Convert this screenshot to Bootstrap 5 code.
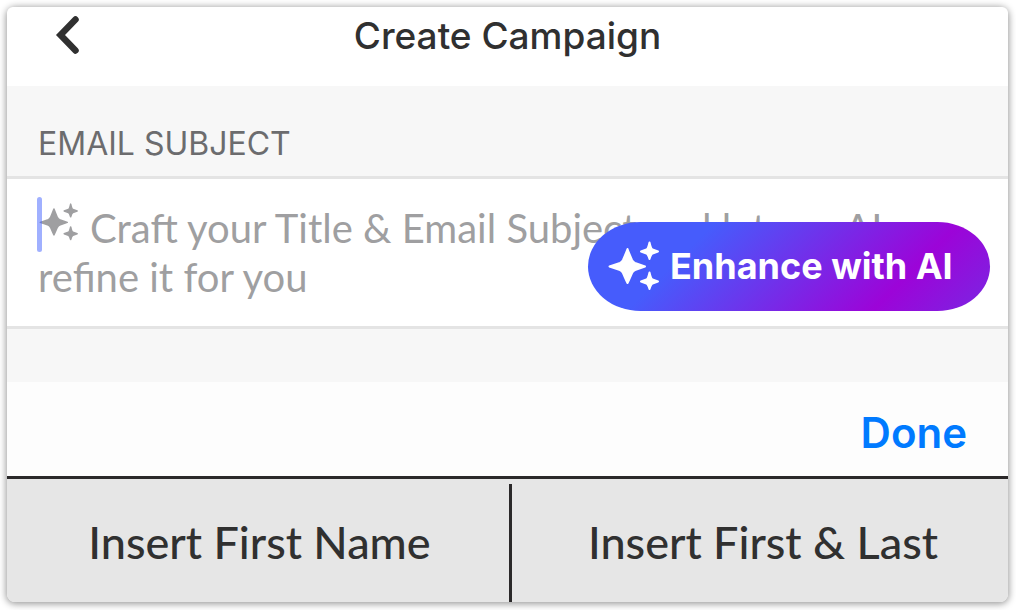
<!DOCTYPE html>
<html lang="en">
<head>
<meta charset="utf-8">
<meta name="viewport" content="width=device-width, initial-scale=1">
<title>Create Campaign</title>
<link href="https://cdn.jsdelivr.net/npm/bootstrap@5.3.0/dist/css/bootstrap.min.css" rel="stylesheet">
<style>
  body { font-family: Inter, "Liberation Sans", sans-serif; color: #303030; background: #fff; padding: 7px 8px 8px 7px; }
  .screen { background: #f7f7f7; border-radius: 8px; box-shadow: 0 1px 7px 1px rgba(0,0,0,.4); min-height: calc(100vh - 15px); }
  .topbar { height: 79px; padding-bottom: 22px; }
  .topbar h1 { font-size: 37px; line-height: 48px; font-weight: 500; }
  .back { left: 48px; top: 7px; width: 26px; height: 42px; }
  .section-label { font-size: 32px; line-height: 40px; color: #6c6c6e; padding: 38px 31px 12px; }
  .field { border-top: 3px solid #e4e4e4; border-bottom: 3px solid #e4e4e4; }
  .subject, .inserts button { font-family: Lato, "Liberation Sans", sans-serif; }
  .subject { font-size: 40px; line-height: 49px; height: 147px; padding: 25px 31px 0; text-indent: 52px; resize: none; outline: 0; }
  .subject::placeholder { color: #9f9fa1; opacity: 1; }
  .hint-icon { left: 32px; top: 24px; width: 39px; height: 38px; color: #9f9fa1; }
  .caret { left: 30px; top: 18px; width: 5px; height: 55px; border-radius: 3px; background: rgba(65,98,255,.5); }
  .enhance { right: 18px; bottom: 15px; width: 402px; height: 89px; padding: 0 0 2px 20px; gap: 11px;
    border-radius: 53px / 45px; font-size: 36px; font-weight: 700; color: #fff;
    background: linear-gradient(135deg, #465cfc 26%, #9c04d8 76%, #7a26e2 100%); }
  .enhance svg { width: 51px; height: 50px; }
  .donebar { background: #fdfdfd; margin-top: 53px; height: 94px; padding: 6px 41px 0; }
  .donebar button { font-size: 42px; font-weight: 600; color: #007aff; }
  .inserts { background: #e6e6e6; border-top: 3px solid #2b292a; padding: 5px 0 0 3px; border-radius: 0 0 8px 8px; }
  .inserts button { font-size: 45px; font-weight: 500; color: #303030; min-height: 118px; }
  .inserts button + button { border-left: 3px solid #2b292a; padding-left: 12px; }
</style>
</head>
<body>
<svg class="d-none">
  <symbol id="sparkles" viewBox="0 0 51 50">
    <g fill="currentColor" stroke="currentColor" stroke-linejoin="round" stroke-width="2">
      <path d="M19.500 8Q21 12 24 19Q25 21 27 22L37 25.500L27 29Q25 30 24 32Q21 39 19.500 42Q18 39 15 32Q14 30 12 29L1.500 25.500L12 22Q14 21 15 19Q18 12 19.500 8Z"/>
      <path d="M41.500 1.500Q43 8 44.500 8.500L50 10.500L44.500 12.500Q43 13 41.500 18Q40 13 38.500 12.500L33 10.500L38.500 8.500Q40 8 41.500 1.500Z"/>
      <path d="M41.500 31.500Q43 38 44.500 38.500L50 40.500L44.500 42.500Q43 43 41.500 48Q40 43 38.500 42.500L33 40.500L38.500 38.500Q40 38 41.500 31.500Z"/>
    </g>
  </symbol>
</svg>
<main class="screen d-flex flex-column">
  <header class="topbar position-relative bg-white rounded-2 rounded-bottom-0 d-flex align-items-center justify-content-center">
    <button type="button" class="back position-absolute border-0 bg-transparent p-0 d-flex" aria-label="Back">
      <svg width="26" height="42" viewBox="0 0 26 42" fill="none" stroke="#303030" stroke-width="6.500" stroke-linecap="round"><path d="M20.500 5.500L5.500 21L20.500 36.500"/></svg>
    </button>
    <h1 class="m-0">Create Campaign</h1>
  </header>
  <label class="section-label" for="subject">EMAIL SUBJECT</label>
  <div class="field position-relative bg-white">
    <textarea id="subject" class="subject d-block w-100 border-0 bg-transparent" placeholder="Craft your Title &amp; Email Subject and let our AI refine it for you"></textarea>
    <svg class="hint-icon position-absolute" aria-hidden="true"><use href="#sparkles"/></svg>
    <span class="caret position-absolute"></span>
    <button type="button" class="enhance position-absolute border-0 d-flex align-items-center text-nowrap">
      <svg aria-hidden="true"><use href="#sparkles"/></svg>
      <span>Enhance with AI</span>
    </button>
  </div>
  <div class="donebar d-flex align-items-center justify-content-end">
    <button type="button" class="border-0 bg-transparent p-0">Done</button>
  </div>
  <div class="inserts d-flex flex-grow-1 overflow-hidden">
    <button type="button" class="col-6 border-0 bg-transparent">Insert First Name</button>
    <button type="button" class="col-6 bg-transparent border-top-0 border-end-0 border-bottom-0">Insert First &amp; Last</button>
  </div>
</main>
<script src="https://cdn.jsdelivr.net/npm/bootstrap@5.3.0/dist/js/bootstrap.bundle.min.js"></script>
</body>
</html>
